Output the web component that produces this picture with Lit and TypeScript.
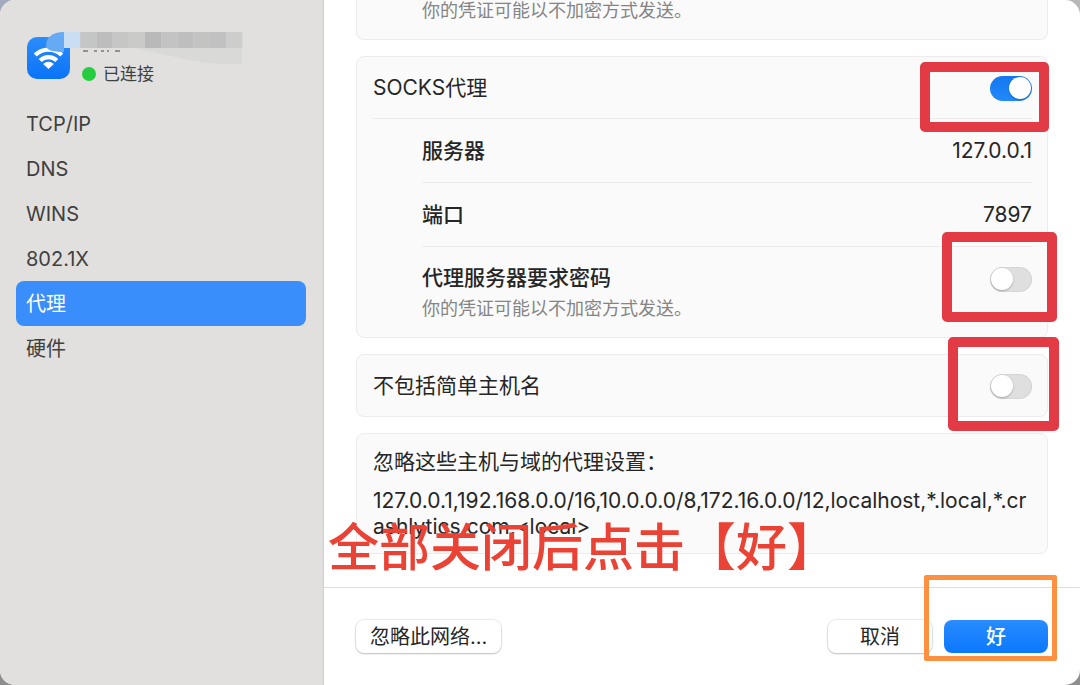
import { LitElement, html, css, svg } from "lit";
import { customElement, property, state } from "lit/decorators.js";

const fonts = css`
  :host {
    font-family: Inter, "Noto Sans CJK SC", sans-serif;
    font-size: 20px;
    line-height: 26px;
    color: #262626;
  }
`;

/** On/off switch, surrounded by a marker frame. */
@customElement("toggle-switch")
export class ToggleSwitch extends LitElement {
  @property() label = "";
  @property({ type: Boolean }) on = false;
  @property() mark = "";

  static styles = css`
    :host { display: block; position: relative; height: 25px; }
    .switch {
      appearance: none;
      display: block;
      width: 42px;
      height: 25px;
      margin: 0;
      border-radius: 13px;
      background: #dfdfdf;
      box-shadow: inset 0 0 1px 1px #d4d4d4;
      padding: 1px;
      box-sizing: border-box;
    }
    .switch::before {
      content: "";
      display: block;
      width: 22px;
      height: 22px;
      border-radius: 50%;
      background: #fff;
      box-shadow: 0 1px 2px #00000040;
    }
    .switch:checked { background: linear-gradient(#1477ee, #2289fb); box-shadow: none; }
    .switch:checked::before { margin-left: 18px; }
    .frame {
      position: absolute;
      border: 10px solid #e23b46;
      border-radius: 5px;
      pointer-events: none;
      z-index: 2;
    }
    .first { inset: -14px -17px -31px -70px; }
    .second { inset: -35px -25px -30px -48px; }
    .third { inset: -37px -27px -32px -42px; }
  `;

  render() {
    return html`
      <input class="switch" type="checkbox" role="switch" aria-label=${this.label} .checked=${this.on} />
      <div class="frame ${this.mark}"></div>
    `;
  }
}

@customElement("side-bar")
export class SideBar extends LitElement {
  @state() selected = "代理";
  private items = ["TCP/IP", "DNS", "WINS", "802.1X", "代理", "硬件"];

  static styles = [fonts, css`
    :host {
      display: block;
      box-sizing: border-box;
      padding: 36px 17px 16px 16px;
      background: #e1e0de;
      border-right: 1px solid #cfcfcf;
      color: #404040;
    }
    .network { display: flex; height: 65px; padding-left: 10px; gap: 12px; position: relative; }
    .wifi { width: 44px; height: 44px; }
    .status { display: flex; align-items: center; gap: 7px; font-size: 17px; margin-top: 26px; height: 24px; }
    .dot { width: 14px; height: 14px; border-radius: 50%; background: #27cd41; }
    .mosaic { position: absolute; left: 28px; top: -5px; width: 200px; height: 36px; }
    nav { display: flex; flex-direction: column; }
    a {
      display: flex;
      align-items: center;
      height: 45px;
      padding: 0 10px;
      border-radius: 8px;
      color: inherit;
      text-decoration: none;
    }
    .active { background: #3a8efb; color: #fff; }
  `];

  private blocks() {
    const tones = ["#c9ddf3", "#c4c5c5", "#bdbdbd", "#c6c6c5", "#cacac9", "#b9b9b9", "#c3c3c3", "#bebebe", "#c3c3c2", "#c1c1c1", "#cdcdcc"];
    return tones.map((c, i) => svg`<rect x=${20 + i * 16.2} y="1" width="16.3" height="16" fill=${c} />`);
  }

  render() {
    return html`
      <div class="network">
        <svg class="wifi" viewBox="0 0 44 44" aria-hidden="true">
          <defs>
            <linearGradient id="blue" x2="0" y2="1">
              <stop offset="0" stop-color="#2b8dfa" /><stop offset="1" stop-color="#0a74f8" />
            </linearGradient>
          </defs>
          <rect x="1" y="1" width="43" height="42" rx="10" fill="url(#blue)" />
          <g fill="none" stroke="#fff" stroke-width="4.2">
            <path d="M9.2 19a19 19 0 0 1 26.6 0" />
            <path d="M14.2 24.4a12 12 0 0 1 16.6 0" />
          </g>
          <path d="M22.5 32.5l-4.8-4.4a7 7 0 0 1 9.6 0z" fill="#fff" stroke="#fff" stroke-linejoin="round" />
        </svg>
        <div class="status"><span class="dot"></span>已连接</div>
        <svg class="mosaic" viewBox="0 0 200 36" aria-hidden="true">
          <path d="M20 1C8 1 2 7 2 14c0 5 6 7 18 7z" fill="#66a9f4" />
          <path d="M90 17h108v16c-38 2-60-6-108-16z" fill="#d9d9d7" />
          <path d="M39 20h5M50 20h3M57 20h3M63 20h2M71 20h5" stroke="#77777a" stroke-width="1.5" />
          ${this.blocks()}
        </svg>
      </div>
      <nav>
        ${this.items.map(
          (name) => html`<a
            href="#"
            class=${name === this.selected ? "active" : ""}
            @click=${(e: Event) => { e.preventDefault(); this.selected = name; }}
            >${name}</a>`
        )}
      </nav>
    `;
  }
}

@customElement("app-root")
export class AppRoot extends LitElement {
  static styles = [fonts, css`
    :host {
      display: block;
      height: 100vh;
      background: radial-gradient(circle at 0 0, #a3aac0 10px, transparent 40px), linear-gradient(#b8b8b8, #8e8e8e);
    }
    .window {
      display: grid;
      grid-template-columns: 30% 1fr;
      height: 100%;
      border-radius: 15px;
      overflow: hidden;
      background: #fff;
    }
    main { display: flex; flex-direction: column; position: relative; min-width: 0; }
    .content {
      flex: 1;
      display: flex;
      flex-direction: column;
      gap: 16px;
      padding: 0 32px;
      font-size: 21px;
    }
    .card {
      border: 1px solid #ececec;
      border-radius: 8px;
      background: #fafafa;
      padding: 0 15px 0 16px;
    }
    .tail { border-top: 0; border-radius: 0 0 8px 8px; padding: 0 16px 17px 65px; }
    .row { display: flex; align-items: center; justify-content: space-between; height: 61px; }
    .row toggle-switch { margin-top: 2px; }
    .sub { margin-left: 49px; height: 63px; border-top: 1px solid #ebebeb; }
    .group .row:first-child + .sub { margin-left: 0; padding-left: 49px; }
    .tall { height: 90px; }
    .tall toggle-switch { align-self: flex-start; margin-top: 20px; }
    .label { font-weight: 500; }
    .hint { margin: 0; font-size: 18px; line-height: 22px; color: #858585; }
    .stack { display: flex; flex-direction: column; gap: 7px; }
    .ignore { display: flex; flex-direction: column; padding: 15px 15px 13px 16px; gap: 13px; }
    .hosts { margin: 0; word-break: break-all; }
    footer {
      display: flex;
      align-items: center;
      gap: 12px;
      height: 97px;
      padding: 0 32px;
      border-top: 1px solid #dedede;
    }
    button {
      font: inherit;
      color: inherit;
      height: 33px;
      border: 0;
      border-radius: 8px;
      background: #fff;
      box-shadow: 0 0 1px 1px #00000014, 0 1px 2px #00000033;
      padding: 0 14px;
    }
    .push { margin-right: auto; }
    .action { width: 104px; }
    .primary {
      display: block;
      width: 100%;
      background: linear-gradient(#2a8cff, #0a78fd);
      color: #fff;
      font-weight: 500;
      box-shadow: none;
    }
    .confirm { position: relative; width: 104px; }
    .frame {
      position: absolute;
      inset: -45px -9px -8px -20px;
      border: 5px solid #fd9141;
      border-radius: 2px;
      pointer-events: none;
    }
    .note {
      position: absolute;
      left: 4px;
      bottom: 105px;
      font-size: 51px;
      font-weight: 500;
      line-height: 64px;
      color: #ea4335;
      white-space: nowrap;
    }
  `];

  render() {
    return html`
      <div class="window">
        <side-bar></side-bar>
        <main>
          <div class="content">
            <section class="card tail"><p class="hint">你的凭证可能以不加密方式发送。</p></section>
            <section class="card group">
              <div class="row">SOCKS代理<toggle-switch label="SOCKS代理" on mark="first"></toggle-switch></div>
              <div class="row sub"><span class="label">服务器</span><span>127.0.0.1</span></div>
              <div class="row sub"><span class="label">端口</span><span>7897</span></div>
              <div class="row sub tall">
                <div class="stack">
                  <span class="label">代理服务器要求密码</span>
                  <p class="hint">你的凭证可能以不加密方式发送。</p>
                </div>
                <toggle-switch label="代理服务器要求密码" mark="second"></toggle-switch>
              </div>
            </section>
            <section class="card">
              <div class="row"><span>不包括简单主机名</span><toggle-switch label="不包括简单主机名" mark="third"></toggle-switch></div>
            </section>
            <section class="card ignore">
              <span>忽略这些主机与域的代理设置：</span>
              <p class="hosts">127.0.0.1,192.168.0.0/16,10.0.0.0/8,172.16.0.0/12,localhost,*.local,*.crashlytics.com,&lt;local&gt;</p>
            </section>
          </div>
          <footer>
            <button class="push">忽略此网络...</button>
            <button class="action">取消</button>
            <div class="confirm"><button class="primary">好</button><div class="frame"></div></div>
          </footer>
          <div class="note">全部关闭后点击【好】</div>
        </main>
      </div>
    `;
  }
}
